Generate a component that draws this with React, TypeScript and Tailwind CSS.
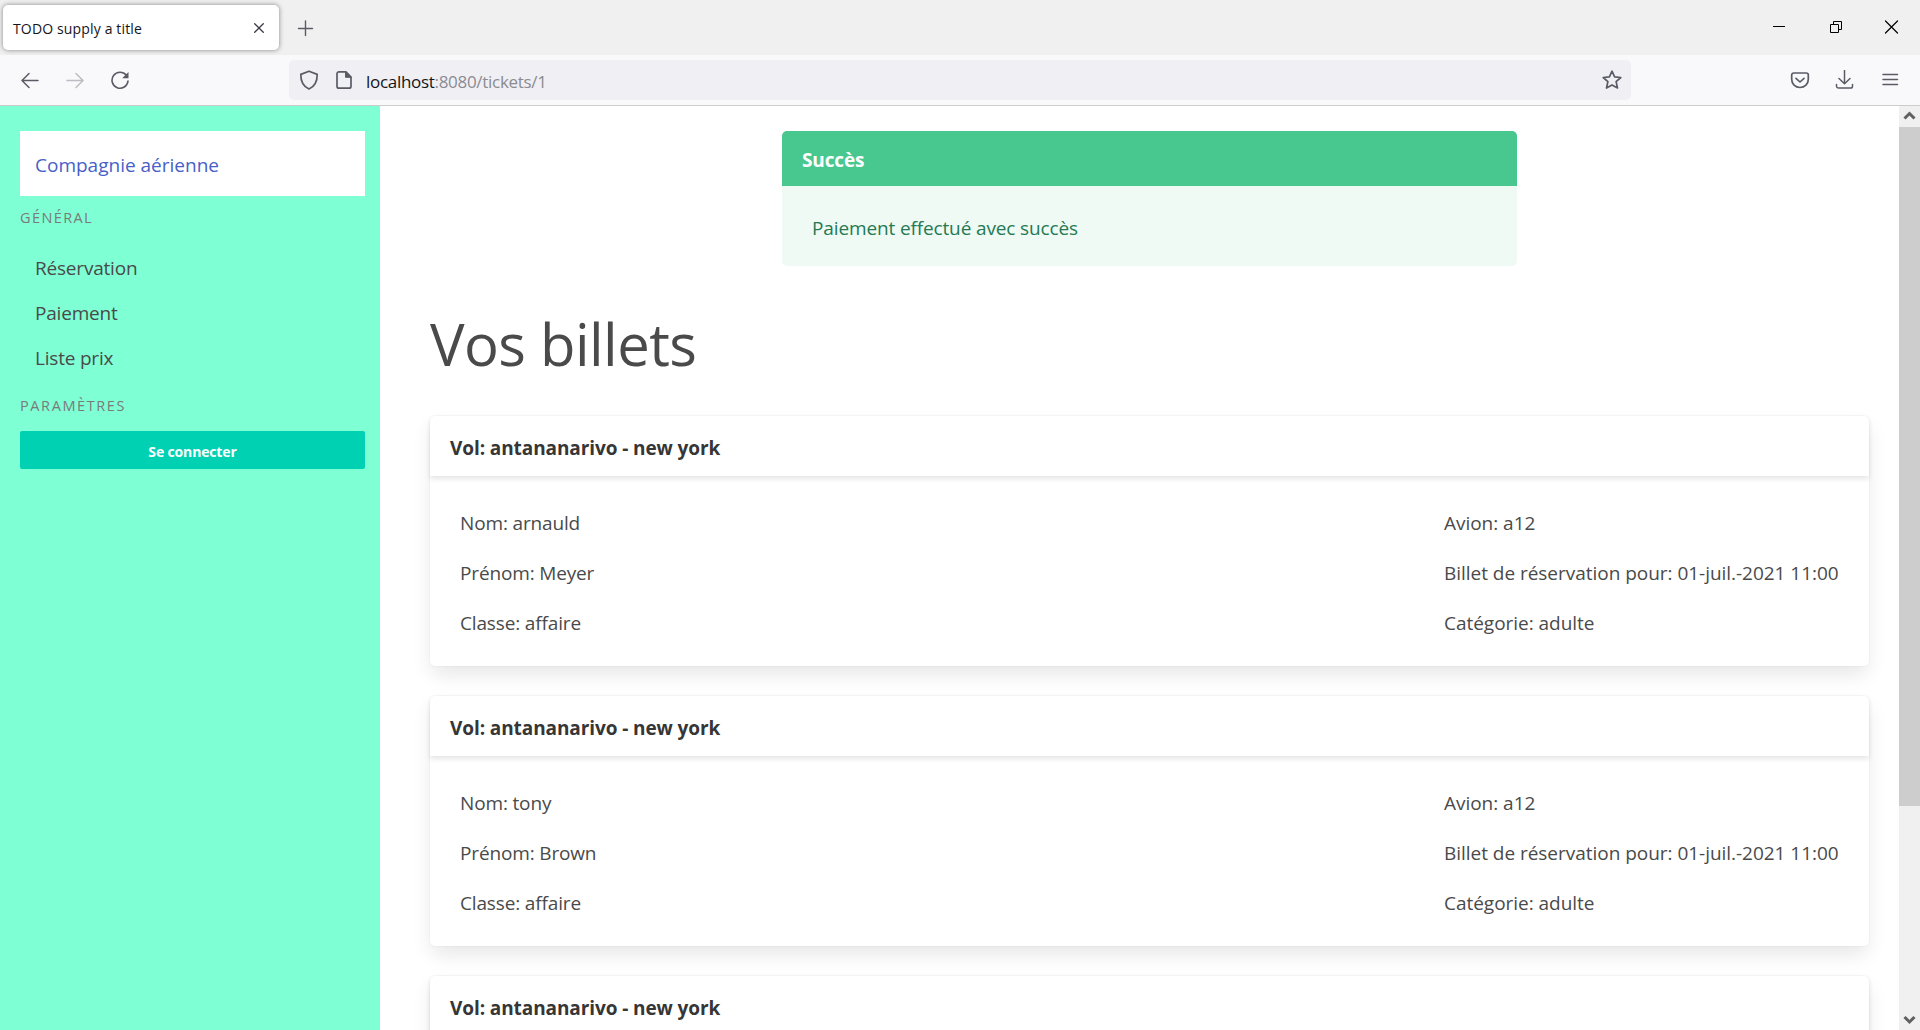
import type { ReactNode } from 'react';

type Ticket = { flight: string; left: string[]; right: string[] };

const tickets: Ticket[] = [
  {
    flight: 'Vol: antananarivo - new york',
    left: ['Nom: arnauld', 'Prénom: Meyer', 'Classe: affaire'],
    right: ['Avion: a12', 'Billet de réservation pour: 01-juil.-2021 11:00', 'Catégorie: adulte'],
  },
  {
    flight: 'Vol: antananarivo - new york',
    left: ['Nom: tony', 'Prénom: Brown', 'Classe: affaire'],
    right: ['Avion: a12', 'Billet de réservation pour: 01-juil.-2021 11:00', 'Catégorie: adulte'],
  },
  {
    flight: 'Vol: antananarivo - new york',
    left: [],
    right: [],
  },
];

function Icon({ children, className = '' }: { children: ReactNode; className?: string }) {
  return (
    <svg
      viewBox="0 0 20 20"
      className={`size-5 shrink-0 ${className}`}
      fill="none"
      stroke="currentColor"
      strokeWidth={1.5}
      strokeLinecap="round"
      strokeLinejoin="round"
    >
      {children}
    </svg>
  );
}

function TabStrip() {
  return (
    <div className="flex h-[55px] items-center bg-[#f0f0f0] pl-[3px]">
      <div className="flex h-[45px] w-[276px] items-center justify-between rounded-[5px] bg-white px-[10px] shadow-[0_0_5px_rgba(0,0,0,0.45)]">
        <span className="pt-[2px] text-[14px] leading-5 tracking-[0.15px] text-[#15141a]">TODO supply a title</span>
        <Icon className="text-[#3a3944]">
          <path d="M5.7 5.7l8.6 8.6M14.3 5.7l-8.6 8.6" strokeWidth={1.3} />
        </Icon>
      </div>
      <Icon className="ml-[16px] text-[#5b5b66]">
        <path d="M10.5 3v14.500M3.500 10.500h14" strokeWidth={1.4} />
      </Icon>
      <div className="ml-auto flex h-[55px] items-start gap-9 pt-[17px] pr-[19px] text-black">
        <Icon>
          <path d="M4 9.500h12" strokeWidth={1} strokeLinecap="butt" />
        </Icon>
        <Icon>
          <path d="M5.500 7.500h8v8h-8zM8.500 7.500v-3h8v8h-3" strokeWidth={1} strokeLinejoin="miter" strokeLinecap="butt" />
        </Icon>
        <Icon>
          <path d="M4.500 4l12 12M16.500 4l-12 12" strokeWidth={1.2} />
        </Icon>
      </div>
    </div>
  );
}

function NavBar() {
  return (
    <div className="flex h-[51px] items-center border-b border-[#cccccc] bg-[#f9f9fb] text-[#5b5b66]">
      <div className="flex w-[289px] gap-[25px] pl-5">
        <Icon>
          <path d="M18 10.500H2.500M9 3.500l-7 7 7 7" />
        </Icon>
        <Icon className="text-[#bcbcc2]">
          <path d="M2 10.500h15.500M11 3.500l7 7-7 7" />
        </Icon>
        <Icon>
          <path d="M16.300 5.300A8 8 0 1 0 18 11" strokeWidth={1.600} />
          <path d="M18.500 2v6.300h-6.300z" fill="currentColor" stroke="none" />
        </Icon>
      </div>
      <div className="flex h-10 w-[1342px] items-center rounded-[5px] bg-[#f0f0f4] pr-[9px] pl-[10px]">
        <Icon>
          <path d="M10 1.200L18.200 4.400C18.300 11 16 16.200 10 19 4 16.200 1.700 11 1.800 4.400z" strokeWidth={1.700} />
        </Icon>
        <Icon className="ml-[15px]">
          <path d="M12 1.800H5A2 2 0 0 0 3 3.800v12.400a2 2 0 0 0 2 2h10a2 2 0 0 0 2-2V7z" strokeWidth={1.700} />
          <path d="M11.500 1.800V7.300H17z" fill="currentColor" strokeWidth={1} />
        </Icon>
        <span className="ml-[12px] pt-[3px] text-[17px] leading-6 tracking-[-0.300px] text-[#8b8b92]">
          <span className="text-[#15141a]">localhost</span>:8080/tickets/1
        </span>
        <Icon className="ml-auto">
          <path
            d="M10 1.200l2.600 5.700 6.200.600-4.700 4.100 1.400 6.400L10 14.900l-5.500 3.100 1.400-6.400L1.200 7.500l6.200-.600z"
            strokeWidth={1.700}
          />
        </Icon>
      </div>
      <div className="ml-auto flex gap-[25px] pr-[20px]">
        <Icon>
          <path d="M3.700 3h12.600a2 2 0 0 1 2 2v4.200c0 4.800-3.500 8.300-8.300 8.300s-8.300-3.500-8.300-8.300V5a2 2 0 0 1 2-2z" strokeWidth={1.700} />
          <path d="M6 8.300l4 3.700 4-3.700" strokeWidth={1.700} />
        </Icon>
        <Icon>
          <path d="M9.500 .5v13M4 8.500l5.500 5.200 5.500-5.200M1.500 14.500v1.800A1.800 1.800 0 0 0 3.300 18h12.400a1.800 1.800 0 0 0 1.800-1.800v-1.800" />
        </Icon>
        <Icon>
          <path d="M3 4.500h14.500M3 9.500h14.500M3 14.500h14.500" />
        </Icon>
      </div>
    </div>
  );
}

function Sidebar() {
  return (
    <aside className="w-[380px] shrink-0 bg-[#7fffd4] pt-[25px] pr-[15px] pl-5">
      <div className="h-[65px] bg-white pl-[15px] text-[19px] leading-[69px] text-[#485fc7]">Compagnie aérienne</div>
      <p className="mt-[11px] text-[14.500px] leading-[22px] tracking-[1.400px] text-[#7a7a7a]">GÉNÉRAL</p>
      <ul className="mt-[17px] pl-[15px] text-[19px] leading-[45px] tracking-[-0.200px] text-[#4a4a4a]">
        <li>Réservation</li>
        <li>Paiement</li>
        <li>Liste prix</li>
      </ul>
      <p className="mt-[14px] text-[14.500px] leading-[22px] tracking-[1.600px] text-[#7a7a7a]">PARAMÈTRES</p>
      <button className="mt-[14px] flex h-[38px] w-full items-center justify-center rounded-[2px] bg-[#00d1b2] pt-[3px] text-[14px] font-bold tracking-[-0.150px] text-white">
        Se connecter
      </button>
    </aside>
  );
}

function TicketCard({ ticket }: { ticket: Ticket }) {
  return (
    <section className="mb-[30px] h-[250px] shrink-0 rounded-[5px] bg-white shadow-[0_10px_20px_-2.500px_rgba(10,10,10,0.1),0_0_0_1px_rgba(10,10,10,0.02)]">
      <h2 className="h-[60px] rounded-t-[5px] pt-[2px] pl-5 text-[19px] leading-[60px] font-bold tracking-[-0.090px] text-[#363636] shadow-[0_2.500px_5px_rgba(10,10,10,0.1)]">
        {ticket.flight}
      </h2>
      <div className="flex justify-between px-[30px] pt-8 text-[19px] leading-[30px] text-[#4a4a4a]">
        <div className="flex flex-col gap-5 tracking-[-0.150px]">
          {ticket.left.map((line) => (
            <p key={line}>{line}</p>
          ))}
        </div>
        <div className="flex w-[395px] flex-col gap-5 tracking-[-0.030px] whitespace-nowrap">
          {ticket.right.map((line) => (
            <p key={line}>{line}</p>
          ))}
        </div>
      </div>
    </section>
  );
}

function Scrollbar() {
  return (
    <div className="flex w-[21px] shrink-0 flex-col items-center bg-[#f0f0f0] text-[#606060]">
      <svg viewBox="0 0 21 21" className="h-[21px] w-[21px]" fill="none" stroke="currentColor" strokeWidth={3}>
        <path d="M5.500 12.500l5-5 5 5" />
      </svg>
      <div className="h-[679px] w-full bg-[#cdcdcd]" />
      <svg viewBox="0 0 21 21" className="mt-auto h-[21px] w-[21px]" fill="none" stroke="currentColor" strokeWidth={3}>
        <path d="M5.500 8l5 5 5-5" />
      </svg>
    </div>
  );
}

export default function App() {
  return (
    <div className="flex h-[1030px] w-[1920px] flex-col overflow-hidden bg-white font-['Open_Sans',sans-serif]">
      <TabStrip />
      <NavBar />
      <div className="flex h-[924px]">
        <Sidebar />
        <main className="flex min-w-0 flex-1 flex-col overflow-hidden pt-[25px] pr-[30px] pl-[50px]">
          <article className="h-[135px] w-[735px] shrink-0 self-center overflow-hidden rounded-[5px] bg-[#effaf5]">
            <header className="h-[55px] bg-[#48c78e] pt-[2px] pl-5 text-[19px] leading-[55px] font-bold tracking-[-0.150px] text-white">
              Succès
            </header>
            <p className="h-20 pt-[2px] pl-[30px] text-[19px] leading-[80px] tracking-[-0.130px] text-[#257953]">
              Paiement effectué avec succès
            </p>
          </article>
          <h1 className="mt-[38px] mb-8 h-20 shrink-0 text-[58px] leading-[80px] tracking-[-0.550px] text-[#4a4a4a]">
            Vos billets
          </h1>
          {tickets.map((ticket, index) => (
            <TicketCard key={index} ticket={ticket} />
          ))}
        </main>
        <Scrollbar />
      </div>
    </div>
  );
}
